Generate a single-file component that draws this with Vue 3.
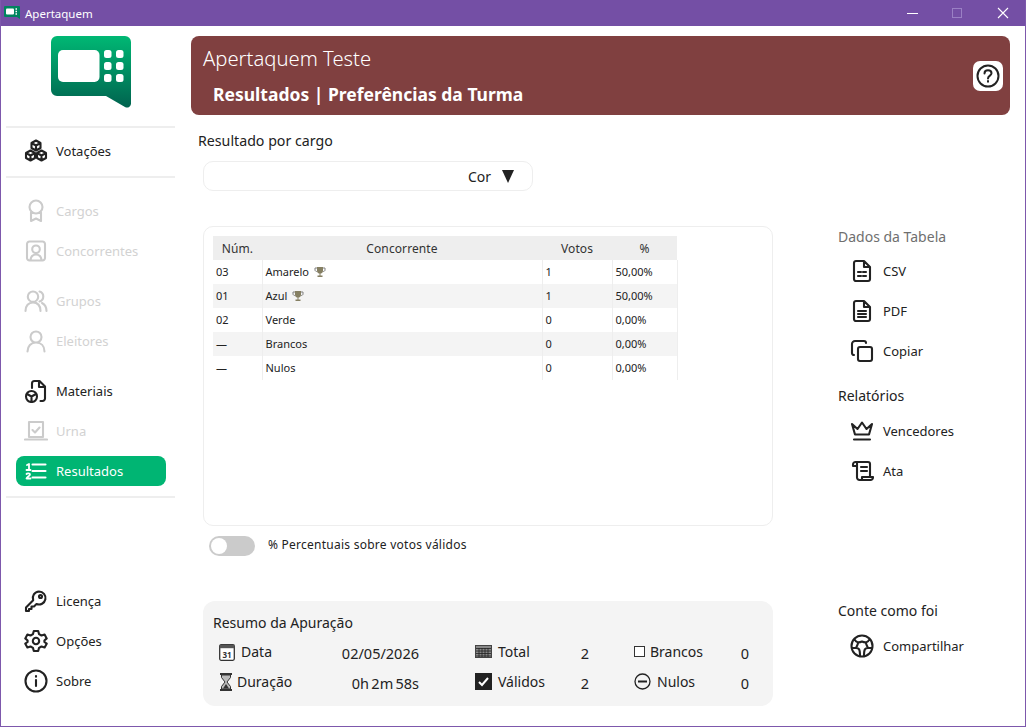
<script setup>
const icons = {
  cubes: 'M12 1.500 16.500 4V9L12 11.500 7.500 9V4ZM7.500 4 12 6.500 16.500 4M12 6.500V11.500M6.500 11.500 11 14V19L6.500 21.500 2 19V14ZM2 14 6.500 16.500 11 14M6.500 16.500V21.500M17.500 11.500 22 14V19L17.500 21.500 13 19V14ZM13 14 17.500 16.500 22 14M17.500 16.500V21.500',
  ribbon: 'M12 1.500a6.500 6.500 0 1 1 0 13a6.500 6.500 0 1 1 0-13ZM7 13.500V22L12 19.500 17 22V13.500',
  contact: 'M5.500 2.500H18.500A2.500 2.500 0 0 1 21 5V19A2.500 2.500 0 0 1 18.500 21.500H5.500A2.500 2.500 0 0 1 3 19V5A2.500 2.500 0 0 1 5.500 2.500ZM12 6.500a3.800 3.800 0 1 1 0 7.600a3.800 3.800 0 1 1 0-7.600ZM6.500 21C7 17 9 15.500 12 15.500S17 17 17.500 21',
  people: 'M9 2.500a5.200 5.200 0 1 1 0 10.400a5.200 5.200 0 1 1 0-10.400ZM1.500 22C1.500 16.500 4.500 13.500 9 13.500S16.500 16.500 16.500 22M15.500 2.500A5.200 5.200 0 0 1 15.500 12.500M18 14C21 15.500 22.500 18.500 22.500 22',
  person: 'M12 2.500a5.500 5.500 0 1 1 0 11a5.500 5.500 0 1 1 0-11ZM3.500 22.500C3.500 17 7 13.500 12 13.500S20.500 17 20.500 22.500',
  docCube: 'M8 9V4.500A2.500 2.500 0 0 1 10.500 2H15.500L21 7.500V19.500A2.500 2.500 0 0 1 18.500 22H16.500M15 2V8H21M7.500 12a5.500 5.500 0 1 1 0 11a5.500 5.500 0 1 1 0-11ZM3 15 7.500 17.500 12 15M7.500 17.500V23',
  laptop: 'M5 3H19V18H5ZM1 20.500H23M8.500 11 11 13.500 15.500 8.500',
  numList: 'M8.500 5.500H21.500M8.500 12H21.500M8.500 18.500H21.500',
  key: 'M15 2.500a6.500 6.500 0 1 1-2.500 12.500L10 17.500H7.500V20H5V22H2V18.500L9.200 11.300A6.500 6.500 0 0 1 15 2.500ZM16.500 6a1.500 1.500 0 1 1 0 3a1.500 1.500 0 1 1 0-3Z',
  gear: 'M9.800 2H14.200L15 5.100L17.500 6.500L20.600 5.600L22.700 9.400L20.400 11.500V13L22.700 14.700L20.600 18.500L17.500 17.500L15 18.900L14.200 22H9.800L9 18.900L6.500 17.500L3.400 18.500L1.300 14.700L3.600 13V11.500L1.300 9.400L3.400 5.600L6.500 6.500L9 5.100ZM12 8.800a3.200 3.200 0 1 1 0 6.400a3.200 3.200 0 1 1 0-6.400Z',
  info: 'M12 1.500a10.500 10.500 0 1 1 0 21a10.500 10.500 0 1 1 0-21ZM12 11V17M12 7V7.800',
  docGrid: 'M6 2H14L20 8V20A2 2 0 0 1 18 22H6A2 2 0 0 1 4 20V4A2 2 0 0 1 6 2ZM14 2V8H20M8 13H11M13 13H16M8 17H11M13 17H16',
  docLines: 'M6 2H14L20 8V20A2 2 0 0 1 18 22H6A2 2 0 0 1 4 20V4A2 2 0 0 1 6 2ZM14 2V8H20M8 12H16M8 15H16M8 18H16',
  copy: 'M10 8H20A2 2 0 0 1 22 10V20A2 2 0 0 1 20 22H10A2 2 0 0 1 8 20V10A2 2 0 0 1 10 8ZM4 16A2 2 0 0 1 2 14V5A3 3 0 0 1 5 2H14A2 2 0 0 1 16 4',
  crown: 'M2 5 5 15.500H19L22 5 16.500 10 12 3.500 7.500 10ZM4 20.500H20',
  scroll: 'M6 3H18A2 2 0 0 1 20 5V18M6 3A2.500 2.500 0 0 0 3 5.500V7H7V3M7 7V18.500A2.500 2.500 0 0 0 9.500 21H20.500A2.500 2.500 0 0 0 23 18.500V18H12V20M11 8H17M11 12H17',
  globe: 'M12 1.500a10.500 10.500 0 1 1 0 21a10.500 10.500 0 1 1 0-21ZM4.500 5C6 9 9 9 12 7.500C15 9 18 9 19.500 5M2 14H6C9 14 10 15 10 22M22 14H18C15 14 14 15 14 22M6 14C7 12 8 10 8 8.800M18 14C17 12 16 10 16 8.800',
  help: 'M12 1.500a10.500 10.500 0 1 1 0 21a10.500 10.500 0 1 1 0-21ZM8.500 9.500C8.500 7.500 10 6.300 12 6.300S15.500 7.500 15.500 9.300C15.500 11.500 12 11.800 12 14.500M12 17V17.800',
}

const topNav = [{ label: 'Votações', icon: 'cubes' }]
const navGroups = [
  [
    { label: 'Cargos', icon: 'ribbon', off: true },
    { label: 'Concorrentes', icon: 'contact', off: true },
  ],
  [
    { label: 'Grupos', icon: 'people', off: true },
    { label: 'Eleitores', icon: 'person', off: true },
  ],
  [
    { label: 'Materiais', icon: 'docCube' },
    { label: 'Urna', icon: 'laptop', off: true },
    { label: 'Resultados', icon: 'numList', active: true },
  ],
]
const bottomNav = [
  { label: 'Licença', icon: 'key' },
  { label: 'Opções', icon: 'gear' },
  { label: 'Sobre', icon: 'info' },
]
const rows = [
  { n: '03', name: 'Amarelo', win: true, v: '1', p: '50,00%' },
  { n: '01', name: 'Azul', win: true, v: '1', p: '50,00%' },
  { n: '02', name: 'Verde', v: '0', p: '0,00%' },
  { n: '—', name: 'Brancos', v: '0', p: '0,00%' },
  { n: '—', name: 'Nulos', v: '0', p: '0,00%' },
]
const tableActions = [
  { label: 'CSV', icon: 'docGrid' },
  { label: 'PDF', icon: 'docLines' },
  { label: 'Copiar', icon: 'copy' },
]
const reportActions = [
  { label: 'Vencedores', icon: 'crown' },
  { label: 'Ata', icon: 'scroll' },
]
</script>

<template>
  <div class="window">
    <header class="titlebar">
      <svg class="app-mini" viewBox="0 0 16 14">
        <path d="M1 0H15A1 1 0 0 1 16 1V13L13 11H1A1 1 0 0 1 0 10V1A1 1 0 0 1 1 0Z" fill="#00845f" />
        <rect x="2" y="2.500" width="8" height="6" rx="1" fill="#fff" />
        <path d="M11.500 3H13M11.500 5.500H13M11.500 8H13" stroke="#fff" stroke-width="1.300" />
      </svg>
      <span class="app-name">Apertaquem</span>
      <div class="controls">
        <svg class="ctl" viewBox="0 0 45 26"><path d="M16 13.500H27" stroke="#fff" /></svg>
        <svg class="ctl" viewBox="0 0 45 26"><rect x="16.500" y="8.500" width="9" height="9" fill="none" stroke="#9a80c4" /></svg>
        <svg class="ctl" viewBox="0 0 45 26"><path d="M17 8 27 18M27 8 17 18" stroke="#fff" stroke-width="1.100" /></svg>
      </div>
    </header>

    <div class="body">
      <aside class="sidebar">
        <svg class="logo" viewBox="0 0 80 72">
          <defs>
            <linearGradient id="logoGrad" x1="0" y1="0" x2="0" y2="1">
              <stop offset="0" stop-color="#00b874" />
              <stop offset="1" stop-color="#00634f" />
            </linearGradient>
          </defs>
          <path d="M6 0H74A6 6 0 0 1 80 6V68A4 4 0 0 1 74 71L55 60H6A6 6 0 0 1 0 54V6A6 6 0 0 1 6 0Z" fill="url(#logoGrad)" />
          <rect x="7" y="14" width="41.500" height="32" rx="5" fill="#fff" />
          <g fill="#fff">
            <rect x="53" y="14" width="7.500" height="8" rx="2.500" />
            <rect x="65" y="14" width="7.500" height="8" rx="2.500" />
            <rect x="53" y="26" width="7.500" height="8" rx="2.500" />
            <rect x="65" y="26" width="7.500" height="8" rx="2.500" />
            <rect x="53" y="38" width="7.500" height="8" rx="2.500" />
            <rect x="65" y="38" width="7.500" height="8" rx="2.500" />
          </g>
        </svg>

        <hr class="rule rule-top" />
        <div v-for="item in topNav" :key="item.label" class="nav-item nav-first">
          <svg class="nav-icon" viewBox="0 0 24 24"><path :d="icons[item.icon]" /></svg>
          <span>{{ item.label }}</span>
        </div>
        <hr class="rule rule-mid" />

        <div v-for="(group, i) in navGroups" :key="i" class="nav-group">
          <div
            v-for="item in group"
            :key="item.label"
            class="nav-item"
            :class="{ off: item.off, active: item.active }"
          >
            <svg class="nav-icon" viewBox="0 0 24 24">
              <path :d="icons[item.icon]" />
              <template v-if="item.active">
                <path class="digit" d="M3 6 5 5V11M2.500 11H6.500M2.500 15C3 14 6 14 6 15.500C6 17 3 17.500 2.500 19.500H6.500" />
              </template>
            </svg>
            <span>{{ item.label }}</span>
          </div>
        </div>
        <hr class="rule rule-end" />

        <div class="nav-bottom">
          <div v-for="item in bottomNav" :key="item.label" class="nav-item">
            <svg class="nav-icon" viewBox="0 0 24 24"><path :d="icons[item.icon]" /></svg>
            <span>{{ item.label }}</span>
          </div>
        </div>
      </aside>

      <main class="main">
        <section class="banner">
          <div class="banner-text">
            <h1>Apertaquem Teste</h1>
            <h2>Resultados | Preferências da Turma</h2>
          </div>
          <button class="help">
            <svg viewBox="0 0 24 24"><path :d="icons.help" /></svg>
          </button>
        </section>

        <div class="grid">
          <div class="filter">
            <div class="filter-label">Resultado por cargo</div>
            <div class="select">
              <span>Cor</span>
              <i class="caret"></i>
            </div>
          </div>

          <div class="left">
            <div class="table-card">
              <table>
                <colgroup>
                  <col class="c1" /><col class="c2" /><col class="c3" /><col class="c4" />
                </colgroup>
                <thead>
                  <tr><th>Núm.</th><th>Concorrente</th><th>Votos</th><th>%</th></tr>
                </thead>
                <tbody>
                  <tr v-for="r in rows" :key="r.name">
                    <td><span class="cell">{{ r.n }}</span></td>
                    <td class="name">
                      <span class="cell">{{ r.name }}
                        <svg v-if="r.win" class="trophy" viewBox="0 0 12 12">
                          <path d="M3 1H9V5C9 7 7 7.500 6.500 7.500V9.500H8.500V11H3.500V9.500H5.500V7.500C5 7.500 3 7 3 5Z" fill="#857f62" />
                          <path d="M3 2H1V4C1 5 2 5.500 3 5.500M9 2H11V4C11 5 10 5.500 9 5.500" fill="none" stroke="#808080" />
                        </svg>
                      </span>
                    </td>
                    <td><span class="cell">{{ r.v }}</span></td>
                    <td><span class="cell">{{ r.p }}</span></td>
                  </tr>
                </tbody>
              </table>
            </div>
            <div class="toggle-row">
              <span class="toggle"><i></i></span>
              <span class="toggle-text">% Percentuais sobre votos válidos</span>
            </div>
          </div>

          <aside class="actions">
            <div class="act-title muted">Dados da Tabela</div>
            <div v-for="a in tableActions" :key="a.label" class="act">
              <svg viewBox="0 0 24 24"><path :d="icons[a.icon]" /></svg>
              <span>{{ a.label }}</span>
            </div>
            <div class="act-title second">Relatórios</div>
            <div v-for="a in reportActions" :key="a.label" class="act">
              <svg viewBox="0 0 24 24"><path :d="icons[a.icon]" /></svg>
              <span>{{ a.label }}</span>
            </div>
          </aside>

          <section class="summary">
            <div class="sum-title">Resumo da Apuração</div>
            <div class="stats">
              <div class="stat-col col-a">
                <div class="stat">
                  <span class="stat-label">
                    <svg class="s16" viewBox="0 0 16 18">
                      <rect x="0.700" y="1.700" width="14.600" height="15.600" rx="1.500" fill="#fff" stroke="#333" stroke-width="1.300" />
                      <rect x="0.700" y="1.700" width="14.600" height="3.500" fill="#555" />
                      <text x="8" y="14.500" text-anchor="middle" class="cal">31</text>
                    </svg>
                    Data
                  </span>
                  <span>02/05/2026</span>
                </div>
                <div class="stat">
                  <span class="stat-label tight">
                    <svg class="s14" viewBox="0 0 14 18">
                      <path d="M1 1H13M1 17H13" stroke="#333" stroke-width="1.800" fill="none" />
                      <path d="M2.500 2H11.500V4.500L8 9 11.500 13.500V16H2.500V13.500L6 9 2.500 4.500Z" fill="#bbb" stroke="#333" />
                      <path d="M4 15.500H10L7 11Z" fill="#333" />
                    </svg>
                    Duração
                  </span>
                  <span class="dur">0h 2m 58s</span>
                </div>
              </div>

              <div class="stat-col col-b">
                <div class="stat">
                  <span class="stat-label">
                    <svg class="s17" viewBox="0 0 17 13">
                      <rect x="0.500" y="0.500" width="16" height="12" fill="#888" stroke="#444" />
                      <path d="M1 3.500H16M1 6H16M1 8.500H16M1 11H16M4 3V12M7 3V12M10 3V12M13 3V12" stroke="#222" stroke-width="0.800" />
                    </svg>
                    Total
                  </span>
                  <span>2</span>
                </div>
                <div class="stat">
                  <span class="stat-label">
                    <svg class="s17" viewBox="0 0 17 17">
                      <rect width="17" height="17" fill="#222" />
                      <path d="M4 9 7 12 13 5" fill="none" stroke="#fff" stroke-width="2" />
                    </svg>
                    Válidos
                  </span>
                  <span>2</span>
                </div>
              </div>

              <div class="stat-col col-c">
                <div class="stat">
                  <span class="stat-label gap5">
                    <i class="box"></i>
                    Brancos
                  </span>
                  <span>0</span>
                </div>
                <div class="stat">
                  <span class="stat-label">
                    <svg class="s17" viewBox="0 0 17 17">
                      <circle cx="8.500" cy="8.500" r="7.500" fill="none" stroke="#222" stroke-width="1.300" />
                      <path d="M4 8.500H13" stroke="#222" stroke-width="2" />
                    </svg>
                    Nulos
                  </span>
                  <span>0</span>
                </div>
              </div>
            </div>
          </section>

          <aside class="share">
            <div class="act-title">Conte como foi</div>
            <div class="act act-share">
              <svg viewBox="0 0 24 24"><path :d="icons.globe" /></svg>
              <span>Compartilhar</span>
            </div>
          </aside>
        </div>
      </main>
    </div>
  </div>
</template>

<style>
html, body { margin: 0; background: #fff; }
</style>

<style scoped>
.window {
  width: 1026px;
  height: 727px;
  box-sizing: border-box;
  border: 1px solid #7d58ac;
  border-top: 0;
  display: flex;
  flex-direction: column;
  background: #fff;
  color: #222;
  font-family: "Noto Sans", "Open Sans", sans-serif;
  font-size: 13px;
  overflow: hidden;
}
.titlebar {
  height: 26px;
  flex: none;
  margin: 0 -1px;
  background: #744fa5;
  display: flex;
  align-items: center;
  padding-left: 4px;
  color: #fff;
  font-size: 11.500px;
}
.app-mini { width: 16px; height: 14px; margin-right: 5px; }
.controls { margin-left: auto; display: flex; }
.ctl { width: 45px; height: 26px; display: block; }

.body { flex: 1; display: flex; min-height: 0; }

.sidebar {
  width: 189px;
  flex: none;
  display: flex;
  flex-direction: column;
  padding-top: 10px;
  box-sizing: border-box;
}
.logo { width: 80px; height: 72px; margin-left: 50px; flex: none; }
.rule {
  margin: 0 0 0 5px;
  width: 169px;
  height: 2px;
  border: 0;
  background: #eee;
  flex: none;
}
.rule-top { margin-top: 18px; }
.nav-first { margin-top: 3px; }
.rule-mid { margin-top: 5px; margin-bottom: 13px; }
.rule-end { margin-top: 5px; }
.nav-group + .nav-group { margin-top: 10px; }
.nav-bottom { margin-top: auto; margin-bottom: 25px; }
.nav-item {
  height: 40px;
  display: flex;
  align-items: center;
  gap: 8px;
  padding-left: 23px;
  box-sizing: border-box;
  flex: none;
}
.nav-icon {
  width: 24px;
  height: 24px;
  flex: none;
  fill: none;
  stroke: #222;
  stroke-width: 2.100;
  stroke-linejoin: round;
  stroke-linecap: round;
}
.nav-item.off { color: #d2d2d2; }
.nav-item.off .nav-icon { stroke: #cbcbcb; }
.nav-item.active {
  position: relative;
  color: #fff;
}
.nav-item.active::before {
  content: "";
  position: absolute;
  left: 15px;
  top: 5px;
  width: 150px;
  height: 30px;
  border-radius: 8px;
  background: #00b573;
}
.nav-item.active > * { position: relative; }
.nav-item.active .nav-icon { stroke: #fff; }
.digit { stroke-width: 1.800; }

.main {
  flex: 1;
  min-width: 0;
  display: flex;
  flex-direction: column;
  padding: 10px 15px 0 1px;
}
.banner {
  height: 79px;
  flex: none;
  background: #804040;
  border-radius: 8px;
  color: #fff;
  padding: 0 7px 0 12px;
  display: flex;
  align-items: flex-end;
  justify-content: space-between;
  box-sizing: border-box;
}
.banner-text { align-self: stretch; }
.banner h1 {
  margin: 8px 0 0;
  font-size: 20.250px;
  line-height: 28px;
  font-weight: 300;
}
.banner h2 {
  margin: 10px 0 0 10px;
  font-size: 17.500px;
  line-height: 24px;
  font-weight: 700;
}
.help {
  width: 30px;
  height: 30px;
  padding: 3px;
  margin-bottom: 24px;
  border: 0;
  border-radius: 7px;
  background: #fff;
  display: block;
}
.help svg {
  display: block;
  width: 24px;
  height: 24px;
  fill: none;
  stroke: #222;
  stroke-width: 2;
  stroke-linecap: round;
}

.grid {
  display: grid;
  grid-template-columns: 582px 1fr;
  grid-template-rows: 111px 375px 105px;
}
.filter { grid-column: 1 / 3; padding-left: 7px; }
.filter-label { margin-top: 16px; font-size: 14.200px; line-height: 20px; }
.select {
  margin: 10px 0 0 5px;
  width: 330px;
  height: 30px;
  box-sizing: border-box;
  border: 1px solid #eee;
  border-radius: 10px;
  display: flex;
  align-items: center;
  justify-content: flex-end;
  padding-right: 18px;
  gap: 11px;
  font-size: 14px;
}
.select span { padding-top: 1px; }
.caret {
  width: 0;
  height: 0;
  border-left: 6.500px solid transparent;
  border-right: 6.500px solid transparent;
  border-top: 13px solid #222;
}

.left { padding-left: 12px; }
.table-card {
  width: 570px;
  height: 300px;
  box-sizing: border-box;
  border: 1px solid #eee;
  border-radius: 10px;
  padding: 9px;
}
table {
  width: 464px;
  table-layout: fixed;
  border-collapse: collapse;
  font-size: 11px;
}
.c1 { width: 49px; }
.c2 { width: 280px; }
.c3 { width: 70px; }
.c4 { width: 65px; }
th {
  height: 24px;
  padding: 0;
  background: #eee;
  font-weight: 400;
  font-size: 12px;
  letter-spacing: 0.100px;
  text-align: center;
  color: #333;
}
td {
  height: 24px;
  padding: 0 0 0 3px;
  border-right: 1px solid #eee;
  box-sizing: border-box;
}
.cell { display: block; margin-top: -2px; }
tbody tr:nth-child(even) td { background: #f4f4f4; }
.trophy { width: 12px; height: 12px; vertical-align: -2px; margin-left: 2px; }

.toggle-row {
  margin: 10px 0 0 6px;
  height: 20px;
  display: flex;
  align-items: center;
  gap: 13px;
  font-size: 12px;
  letter-spacing: 0.250px;
}
.toggle-text { padding-bottom: 3px; }
.toggle {
  width: 46px;
  height: 20px;
  border-radius: 10px;
  background: #cbcbcb;
  display: block;
  padding: 2px;
  box-sizing: border-box;
}
.toggle i {
  display: block;
  width: 16px;
  height: 16px;
  border-radius: 50%;
  background: #fff;
}

.actions { padding: 0 0 0 65px; }
.act-title { font-size: 14px; line-height: 20px; }
.muted { color: #6f6f6f; margin-top: 1px; }
.second { margin-top: 15px; }
.act {
  height: 40px;
  display: flex;
  align-items: center;
  gap: 9px;
  padding-left: 12px;
}
.muted + .act { margin-top: 4px; }
.second + .act { margin-top: 5px; }
.act svg {
  width: 24px;
  height: 24px;
  flex: none;
  fill: none;
  stroke: #222;
  stroke-width: 2.100;
  stroke-linejoin: round;
  stroke-linecap: round;
}

.summary {
  margin-left: 12px;
  width: 570px;
  height: 105px;
  box-sizing: border-box;
  background: #f4f4f4;
  border-radius: 12px;
  padding: 12px 0 0 10px;
}
.sum-title { font-size: 14px; line-height: 20px; }
.stats { display: flex; margin-top: 9px; padding-left: 6px; font-size: 14.500px; }
.stat-col { display: flex; flex-direction: column; gap: 8px; flex: none; }
.col-a { width: 200px; }
.col-b { width: 114px; margin-left: 56px; }
.col-c { width: 115px; margin-left: 45px; }
.stat {
  height: 22px;
  display: flex;
  align-items: center;
  justify-content: space-between;
}
.stat-label {
  display: flex;
  align-items: center;
  gap: 6px;
  font-size: 14px;
  padding-bottom: 3px;
}
.tight { gap: 4px; }
.gap5 { gap: 5px; }
.dur { word-spacing: -1.500px; }
.s16 { width: 16px; height: 18px; }
.s14 { width: 14px; height: 18px; }
.s17 { width: 17px; height: 17px; }
.cal { font-size: 8px; font-weight: 700; fill: #333; }
.box {
  display: block;
  width: 11px;
  height: 11px;
  box-sizing: border-box;
  border: 1px solid #333;
  background: #fff;
}

.share { padding: 0 0 0 65px; }
.act-share { margin-top: 5px; }
</style>
